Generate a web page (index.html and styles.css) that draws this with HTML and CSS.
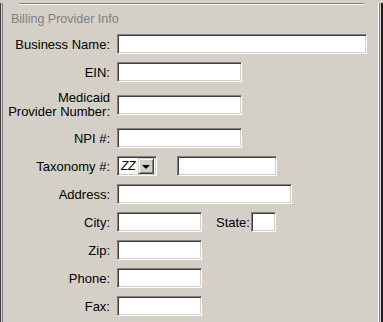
FILE: index.html
```html
<!DOCTYPE html>
<html>
<head>
<meta charset="utf-8">
<link rel="stylesheet" href="styles.css">
</head>
<body>
<div class="frame">
  <div class="pane">
    <div class="topline"></div>
    <div class="title">Billing Provider Info</div>
    <div class="form">
      <label class="lbl">Business Name:</label>
      <div class="cell"><input class="txt w250" type="text"></div>

      <label class="lbl">EIN:</label>
      <div class="cell"><input class="txt w125" type="text"></div>

      <label class="lbl two">Medicaid<br>Provider Number:</label>
      <div class="cell tall"><input class="txt w125" type="text"></div>

      <label class="lbl">NPI #:</label>
      <div class="cell"><input class="txt w125" type="text"></div>

      <label class="lbl">Taxonomy #:</label>
      <div class="cell row">
        <div class="select">
          <span class="sel-val">ZZ</span>
          <span class="sel-btn"><span class="tri"></span></span>
        </div>
        <input class="txt w100 tax2" type="text">
      </div>

      <label class="lbl">Address:</label>
      <div class="cell"><input class="txt w175" type="text"></div>

      <label class="lbl">City:</label>
      <div class="cell row">
        <input class="txt w85" type="text">
        <span class="state-lbl">State:</span>
        <input class="txt w25" type="text">
      </div>

      <label class="lbl">Zip:</label>
      <div class="cell"><input class="txt w85" type="text"></div>

      <label class="lbl">Phone:</label>
      <div class="cell"><input class="txt w85" type="text"></div>

      <label class="lbl">Fax:</label>
      <div class="cell"><input class="txt w85" type="text"></div>
    </div>
  </div>
</div>
</body>
</html>
```
FILE: styles.css
```css
html, body {
  margin: 0;
  padding: 0;
  background: #d4d0c8;
}
body {
  width: 383px;
  height: 322px;
  overflow: hidden;
  font-family: "Liberation Sans", Arial, sans-serif;
  font-size: 13px;
  color: #000;
}
.frame {
  box-sizing: border-box;
  width: 383px;
  height: 322px;
  border-left: 1px solid #404040;
  border-bottom: 2px solid #000;
  border-right: 2px solid #202020;
  box-shadow: inset 0 -1px #404040;
}
.pane {
  box-sizing: border-box;
  height: 100%;
  margin-left: 1px;
  margin-right: 1px;
  border-left: 1px solid #808080;
  border-right: 1px solid #808080;
  box-shadow: inset -1px 0 #ffffff;
}
.topline {
  margin: 3px 0 0 16px;
  width: 345px;
  height: 0;
  border-top: 1px solid #808080;
  border-bottom: 1px solid #ffffff;
}
.title {
  margin: 7px 0 7px 8px;
  height: 15px;
  line-height: 15px;
  font-size: 12.5px;
  color: #808080;
}
.form {
  display: grid;
  grid-template-columns: 107px auto;
  column-gap: 7px;
  row-gap: 8px;
  align-items: center;
}
.lbl {
  text-align: right;
  line-height: 15px;
  white-space: nowrap;
}
.lbl.two {
  line-height: 14px;
}
.cell {
  display: flex;
  align-items: center;
  height: 20px;
}
.cell.tall {
  height: 30px;
}
.row {
  gap: 0;
}
.txt {
  box-sizing: border-box;
  height: 20px;
  margin: 0;
  padding: 0 3px;
  background: #fff;
  border: 1px solid;
  border-color: #808080 #ffffff #ffffff #808080;
  box-shadow: inset 1px 1px #404040, inset -1px -1px #d4d0c8;
  outline: none;
  font: inherit;
}
.w250 { width: 250px; }
.w175 { width: 175px; }
.w125 { width: 125px; }
.w100 { width: 100px; }
.w85 { width: 85px; }
.w25 { width: 25px; }
.tax2 { margin-left: 20px; }
.state-lbl {
  margin-left: 14px;
  margin-right: 1px;
  line-height: 15px;
}
.select {
  box-sizing: border-box;
  width: 40px;
  height: 20px;
  display: flex;
  align-items: center;
  background: #fff;
  border: 1px solid;
  border-color: #808080 #ffffff #ffffff #808080;
  box-shadow: inset 1px 1px #404040, inset -1px -1px #d4d0c8;
  padding: 2px;
}
.sel-val {
  flex: 1;
  font-size: 12px;
  line-height: 14px;
  padding-left: 1px;
  font-style: italic;
}
.sel-btn {
  box-sizing: border-box;
  width: 16px;
  height: 16px;
  background: #d4d0c8;
  border: 1px solid;
  border-color: #d4d0c8 #404040 #404040 #d4d0c8;
  box-shadow: inset 1px 1px #ffffff, inset -1px -1px #808080;
  display: flex;
  align-items: center;
  justify-content: center;
}
.tri {
  width: 0;
  height: 0;
  border-left: 4px solid transparent;
  border-right: 4px solid transparent;
  border-top: 4px solid #000;
  margin-top: 1px;
}
```
